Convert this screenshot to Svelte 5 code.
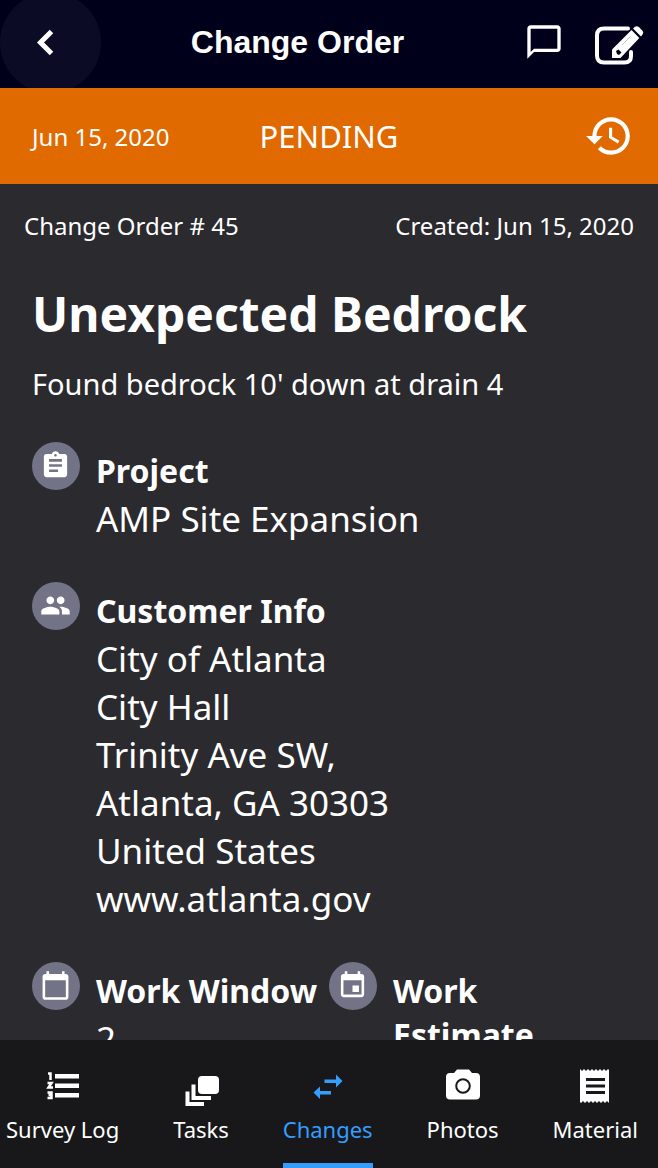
<script lang="ts">
	interface Tab {
		id: string;
		label: string;
	}

	const tabs: Tab[] = [
		{ id: 'survey', label: 'Survey Log' },
		{ id: 'tasks', label: 'Tasks' },
		{ id: 'changes', label: 'Changes' },
		{ id: 'photos', label: 'Photos' },
		{ id: 'material', label: 'Material' }
	];

	const customer = [
		'City of Atlanta',
		'City Hall',
		'Trinity Ave SW,',
		'Atlanta, GA 30303',
		'United States'
	];

	let active = $state('changes');
</script>

<div class="screen">
	<header class="topbar">
		<button class="back" aria-label="Back">
			<svg width="24" height="28" viewBox="0 0 24 28">
				<path d="M18.500 3.500 7.500 14.500 18.500 25.500" fill="none" stroke="currentColor" stroke-width="5" />
			</svg>
		</button>
		<h1>Change Order</h1>
		<div class="actions">
			<button aria-label="Comments">
				<svg width="40" height="40" viewBox="0 0 24 24">
					<path d="M20 2H4c-1.100 0-2 .9-2 2v18l4-4h14c1.100 0 2-.9 2-2V4c0-1.100-.9-2-2-2zm0 14H6l-2 2V4h16v12z" />
				</svg>
			</button>
			<button aria-label="Edit">
				<svg width="50" height="48" viewBox="0 -7 50 48">
					<path d="M34 3.500H10Q3 3.500 3 10.500V30.500Q3 37.500 10 37.500H30.500Q37 37.500 37 31V27" fill="none" stroke="currentColor" stroke-width="4" stroke-linecap="round" />
					<path d="M37.500 5 45.300 13 26.500 33H18V24.500z" />
					<path d="M39 3.500 41 1.800Q43 .5 45 2.200L48.500 5.700Q50 7.500 48.500 9.500L47 11.500z" />
					<path d="M22 26 24.500 24.500 27.500 27.500 25 30 23 29z" fill="#00001a" />
					<path d="M28 20 37 11" stroke="#c4c4cc" stroke-width="1" />
				</svg>
			</button>
		</div>
	</header>

	<section class="status">
		<time datetime="2020-06-15">Jun 15, 2020</time>
		<strong>PENDING</strong>
		<button aria-label="History">
			<svg width="50" height="50" viewBox="0 0 24 24">
				<path d="M13 3a9 9 0 0 0-9 9H1l3.890 3.890.07.14L9 12H6c0-3.870 3.130-7 7-7s7 3.130 7 7-3.130 7-7 7c-1.930 0-3.680-.79-4.940-2.060l-1.420 1.420A8.954 8.954 0 0 0 13 21a9 9 0 0 0 0-18zm-1 5v5l4.280 2.540.72-1.210-3.500-2.080V8H12z" />
			</svg>
		</button>
	</section>

	<main>
		<div class="meta">
			<span>Change Order # 45</span>
			<span>Created: Jun 15, 2020</span>
		</div>

		<div class="details">
			<h2>Unexpected Bedrock</h2>
			<p class="summary">Found bedrock 10' down at drain 4</p>

			<section class="entry">
				<span class="badge">
					<svg width="31" height="31" viewBox="0 0 24 24">
						<path d="M19 3h-4.180C14.400 1.840 13.300 1 12 1c-1.300 0-2.400.84-2.820 2H5c-1.100 0-2 .9-2 2v14c0 1.100.9 2 2 2h14c1.100 0 2-.9 2-2V5c0-1.100-.9-2-2-2zm-7 0c.55 0 1 .45 1 1s-.45 1-1 1-1-.45-1-1 .45-1 1-1zm2 14H7v-2h7v2zm3-4H7v-2h10v2zm0-4H7V7h10v2z" />
					</svg>
				</span>
				<div>
					<h3>Project</h3>
					<p>AMP Site Expansion</p>
				</div>
			</section>

			<section class="entry">
				<span class="badge">
					<svg width="31" height="31" viewBox="0 0 24 24">
						<path d="M16 11c1.660 0 2.990-1.340 2.990-3S17.660 5 16 5c-1.660 0-3 1.340-3 3s1.340 3 3 3zm-8 0c1.660 0 2.990-1.340 2.990-3S9.660 5 8 5C6.340 5 5 6.340 5 8s1.340 3 3 3zm0 2c-2.330 0-7 1.170-7 3.500V19h14v-2.500c0-2.330-4.670-3.500-7-3.500zm8 0c-.29 0-.62.02-.97.05 1.160.84 1.970 1.970 1.970 3.450V19h6v-2.500c0-2.330-4.670-3.500-7-3.500z" />
					</svg>
				</span>
				<div>
					<h3>Customer Info</h3>
					{#each customer as line}
						<p>{line}</p>
					{/each}
					<p><a href="http://www.atlanta.gov">www.atlanta.gov</a></p>
				</div>
			</section>

			<div class="columns">
				<section class="entry">
					<span class="badge">
						<svg width="31" height="31" viewBox="0 0 24 24">
							<path d="M20 3h-1V1h-2v2H7V1H5v2H4c-1.100 0-2 .9-2 2v16c0 1.100.9 2 2 2h16c1.100 0 2-.9 2-2V5c0-1.100-.9-2-2-2zm0 18H4V8h16v13z" />
						</svg>
					</span>
					<div>
						<h3>Work Window</h3>
						<p>2</p>
					</div>
				</section>
				<section class="entry">
					<span class="badge">
						<svg width="31" height="31" viewBox="0 0 24 24">
							<path d="M17 12h-5v5h5v-5zM16 1v2H8V1H6v2H5c-1.110 0-1.990.9-1.990 2L3 19c0 1.100.89 2 2 2h14c1.100 0 2-.9 2-2V5c0-1.100-.9-2-2-2h-1V1h-2zm3 18H5V8h14v11z" />
						</svg>
					</span>
					<div>
						<h3>Work Estimate</h3>
					</div>
				</section>
			</div>
		</div>
	</main>

	<nav>
		{#each tabs as tab}
			<button class="tab" class:active={active === tab.id} onclick={() => (active = tab.id)}>
				<svg width="40" height="40" viewBox="0 0 40 40">
					{#if tab.id === 'survey'}
						<path d="M12 8h24v4.500H12zM12 17.500h24V22H12zM12 27h24v4.500H12z" />
						<path d="M5 7.500H7.500V14M4.500 17H8.500L5.500 21.500H10M4.500 26.500H8.500V32H4.500M5.500 29H8.500" fill="none" stroke="currentColor" stroke-width="2.500" />
					{:else if tab.id === 'tasks'}
						<rect x="17" y="10" width="21" height="18" rx="4" />
						<path d="M12.500 18.500V32H30M6.500 25.500V38H23" fill="none" stroke="currentColor" stroke-width="4" />
					{:else if tab.id === 'changes'}
						<path d="M12 20.500v4.500h11v3.500H12V33l-6.500-6.500zM28 8.500l6.500 6.500-6.500 6.500V17H16.500v-3.500H28z" />
					{:else if tab.id === 'photos'}
						<path d="M14 3.500h12l3 3.500h4q4 0 4 4v18.500q0 4-4 4H7q-4 0-4-4V11q0-4 4-4h4z" />
						<circle cx="20" cy="20" r="6.800" fill="none" stroke="#18181a" stroke-width="2" />
					{:else}
						<path d="M5 3l2 2 2-2 2 2 2-2 2 2 2-2 2 2 2-2 2 2 2-2 2 2 2-2 2 2 2-2 1 1v33l-2-2-2 2-2-2-2 2-2-2-2 2-2-2-2 2-2-2-2 2-2-2-2 2-2-2-2 2-1-1z" />
						<path d="M11 13.500h19M11 20h19M11 26.500h19" stroke="#18181a" stroke-width="3" />
					{/if}
				</svg>
				<span>{tab.label}</span>
			</button>
		{/each}
	</nav>
</div>

<style>
	:global(body) {
		background: #2b2a2e;
	}

	.screen {
		display: flex;
		flex-direction: column;
		height: 100vh;
		overflow: hidden;
		background: #2b2a2e;
		color: #fff;
		font-family: 'Noto Sans', sans-serif;
	}

	h1,
	h2,
	h3,
	p {
		margin: 0;
	}

	button {
		display: flex;
		padding: 0;
		border: 0;
		background: none;
		color: inherit;
		font: inherit;
		cursor: pointer;
	}

	svg {
		display: block;
		fill: currentColor;
	}

	a {
		color: inherit;
		text-decoration: none;
	}

	.topbar {
		display: flex;
		flex-shrink: 0;
		align-items: center;
		height: 88px;
		padding: 0 14px 4px 0;
		box-sizing: border-box;
		background: #00001a;
		overflow: hidden;
	}

	.back {
		flex-shrink: 0;
		align-items: center;
		justify-content: center;
		width: 101px;
		height: 101px;
		padding-right: 12px;
		box-sizing: border-box;
		border-radius: 50%;
		background: #0b0b25;
	}

	h1 {
		flex: 1;
		font-family: 'Liberation Sans', Arial, sans-serif;
		font-size: 32px;
		line-height: 40px;
		text-align: center;
	}

	.actions {
		display: flex;
		align-items: center;
		gap: 30px;
		padding-left: 30px;
	}

	.status {
		display: grid;
		grid-template-columns: 1fr auto 1fr;
		flex-shrink: 0;
		align-items: center;
		height: 96px;
		padding: 0 24px 0 32px;
		background: #e16a00;
	}

	.status time {
		font-size: 24px;
	}

	.status strong {
		padding-right: 8px;
		font-size: 31px;
		font-weight: 400;
	}

	.status button {
		justify-self: end;
	}

	main {
		flex: 1;
		min-height: 0;
		overflow: hidden;
	}

	.meta {
		display: flex;
		justify-content: space-between;
		padding: 24px 24px 0;
		font-size: 24px;
		line-height: 36px;
	}

	.details {
		padding: 36px 32px;
	}

	h2 {
		font-size: 48px;
		line-height: 68px;
	}

	.summary {
		margin-bottom: 22px;
		font-size: 29px;
		line-height: 72px;
	}

	.entry {
		display: flex;
		align-items: flex-start;
		gap: 16px;
		margin-bottom: 39px;
		font-size: 35px;
		line-height: 48px;
	}

	.badge {
		display: flex;
		flex-shrink: 0;
		align-items: center;
		justify-content: center;
		width: 48px;
		height: 48px;
		padding: 0 2px 2px 0;
		box-sizing: border-box;
		border-radius: 50%;
		background: #737387;
	}

	h3 {
		padding: 7px 0 2px;
		font-size: 32px;
		line-height: 44px;
	}

	.columns {
		display: grid;
		grid-template-columns: 1fr 1fr;
	}

	nav {
		display: flex;
		flex-shrink: 0;
		justify-content: space-between;
		height: 128px;
		padding: 0 20px 0 6px;
		box-sizing: border-box;
		background: #18181a;
	}

	.tab {
		flex-direction: column;
		align-items: center;
		gap: 3px;
		padding-top: 26px;
		box-sizing: border-box;
		border-bottom: 5px solid transparent;
		font-size: 22px;
		line-height: 40px;
	}

	.tab.active {
		border-color: #349dfe;
		color: #349dfe;
	}
</style>
